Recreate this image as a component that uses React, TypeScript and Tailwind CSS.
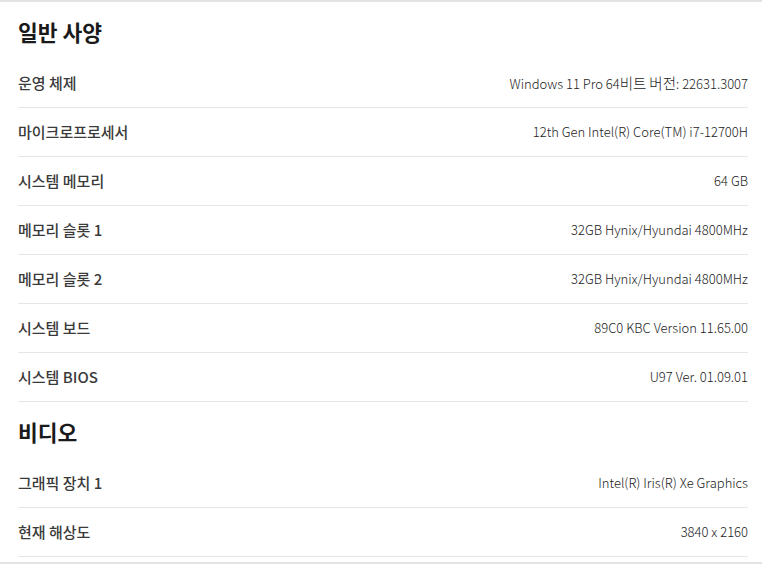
import React from "react";

const sections: { title: string; rows: [string, string][] }[] = [
  {
    title: "일반 사양",
    rows: [
      ["운영 체제", "Windows 11 Pro 64비트 버전: 22631.3007"],
      ["마이크로프로세서", "12th Gen Intel(R) Core(TM) i7-12700H"],
      ["시스템 메모리", "64 GB"],
      ["메모리 슬롯 1", "32GB Hynix/Hyundai 4800MHz"],
      ["메모리 슬롯 2", "32GB Hynix/Hyundai 4800MHz"],
      ["시스템 보드", "89C0 KBC Version 11.65.00"],
      ["시스템 BIOS", "U97 Ver. 01.09.01"],
    ],
  },
  {
    title: "비디오",
    rows: [
      ["그래픽 장치 1", "Intel(R) Iris(R) Xe Graphics"],
      ["현재 해상도", "3840 x 2160"],
    ],
  },
];

export default function App() {
  return (
    <div
      className="w-[762px] h-[564px] overflow-hidden bg-white border-t-2 border-b-2 border-[#e3e3e3]"
      style={{ fontFamily: '"Noto Sans CJK KR", "Noto Sans", sans-serif' }}
    >
      <div className="pl-[18px] pr-[14px]">
        {sections.map((s) => (
          <div key={s.title}>
            <div className="pt-[16px] pb-[13px] h-[57px] text-[21.5px] leading-[28px] font-bold text-[#1a1a1a]">
              {s.title}
            </div>
            {s.rows.map(([k, v]) => (
              <div
                key={k}
                className="h-[49px] flex items-center justify-between border-b border-[#e6e6e6]"
              >
                <span className="text-[15px] font-medium text-[#3a3a3a]">{k}</span>
                <span className="text-[13px] font-light text-[#222]">
                  {v.split(/([가-힣]+)/).map((part, i) =>
                    /[가-힣]/.test(part) ? (
                      <span key={i} className="text-[14.5px]">
                        {part}
                      </span>
                    ) : (
                      <span key={i}>{part}</span>
                    )
                  )}
                </span>
              </div>
            ))}
          </div>
        ))}
      </div>
    </div>
  );
}
